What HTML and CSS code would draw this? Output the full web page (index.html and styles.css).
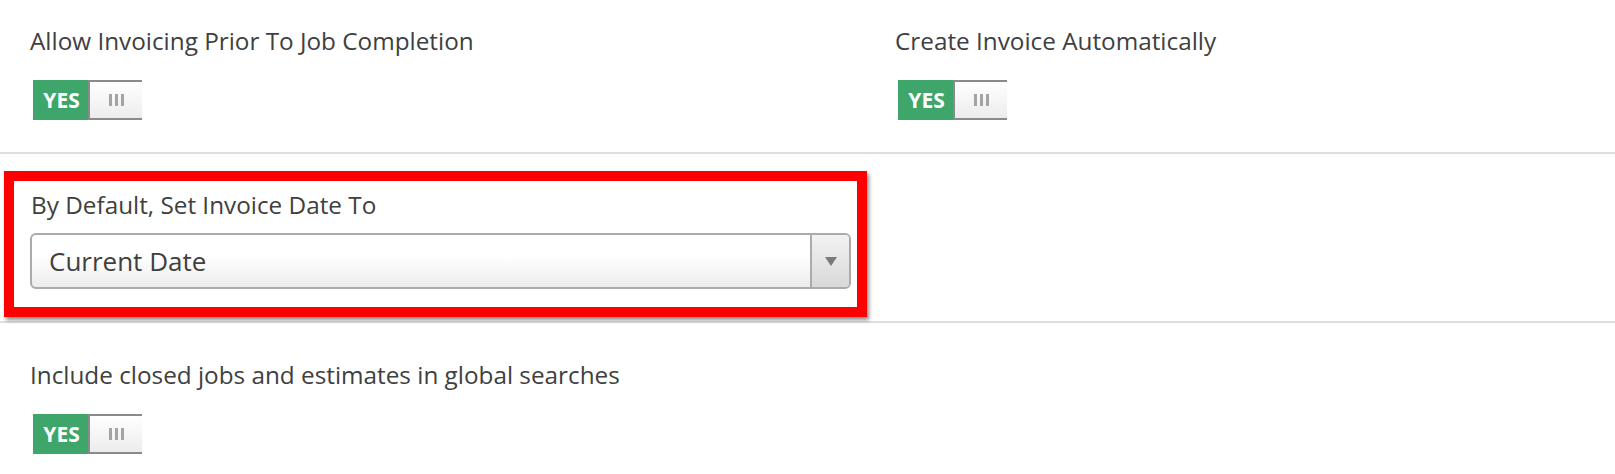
FILE: index.html
```html
<!DOCTYPE html>
<html>
<head>
<meta charset="utf-8">
<link rel="stylesheet" href="styles.css">
</head>
<body>
<div class="settings">
  <div class="row row-two">
    <div class="field">
      <div class="label">Allow Invoicing Prior To Job Completion</div>
      <div class="toggle"><span class="on">YES</span><span class="knob"><i></i><i></i><i></i></span></div>
    </div>
    <div class="field">
      <div class="label">Create Invoice Automatically</div>
      <div class="toggle"><span class="on">YES</span><span class="knob"><i></i><i></i><i></i></span></div>
    </div>
  </div>
  <div class="row row-mid">
    <div class="highlight">
      <div class="label">By Default, Set Invoice Date To</div>
      <div class="select">
        <span class="value">Current Date</span>
        <span class="arrow"><svg width="12" height="10" viewBox="0 0 12 10"><path d="M0 1h12L6 10z" fill="#7a7a7a"/></svg></span>
      </div>
    </div>
  </div>
  <div class="row row-last">
    <div class="field">
      <div class="label">Include closed jobs and estimates in global searches</div>
      <div class="toggle"><span class="on">YES</span><span class="knob"><i></i><i></i><i></i></span></div>
    </div>
  </div>
</div>
</body>
</html>
```
FILE: styles.css
```css
* { box-sizing: border-box; }
body {
  margin: 0;
  background: #fff;
  font-family: "Open Sans", "DejaVu Sans", sans-serif;
  color: #404040;
}
.row { border-bottom: 2px solid #dedede; }
.row-last { border-bottom: none; }
.row-two {
  display: grid;
  grid-template-columns: 865px 1fr;
  padding: 25px 0 32px 30px;
}
.label {
  font-size: 24.3px;
  line-height: 32px;
  white-space: nowrap;
}
.toggle {
  display: flex;
  width: 109px;
  height: 40px;
  margin-top: 23px;
  margin-left: 3px;
}
.on {
  width: 55px;
  background: #3ea66b;
  color: #fff;
  font-weight: 700;
  font-size: 21px;
  line-height: 1;
  display: flex;
  align-items: center;
  justify-content: center;
  padding-left: 2px;
}
.knob {
  flex: 1;
  display: flex;
  align-items: center;
  justify-content: center;
  gap: 3px;
  border-top: 2px solid #8a8a8a;
  border-bottom: 2px solid #8a8a8a;
  border-left: 2px solid #8a8a8a;
  background: linear-gradient(#ffffff, #ececec);
}
.knob i {
  width: 3px;
  height: 12px;
  background: #a4a4a4;
}
.row-mid {
  padding: 17px 0 4px 4px;
}
.highlight {
  width: 863px;
  border: 10px solid #ff0000;
  box-shadow: 2px 3px 4px rgba(0,0,0,0.45);
  padding: 8px 6px 18px 16px;
}
.highlight .label { padding-left: 1px; }
.select {
  margin-top: 12px;
  height: 56px;
  display: flex;
  border: 2px solid #ababab;
  border-radius: 6px;
  background: linear-gradient(#ffffff 40%, #ececec);
  overflow: hidden;
}
.value {
  flex: 1;
  display: flex;
  align-items: center;
  padding-left: 17px;
  font-size: 26px;
  color: #404040;
}
.arrow {
  width: 39px;
  border-left: 2px solid #ababab;
  background: linear-gradient(#f2f2f2, #d8d8d8);
  display: flex;
  align-items: center;
  justify-content: center;
}
.row-last {
  padding: 36px 0 20px 30px;
}
```
